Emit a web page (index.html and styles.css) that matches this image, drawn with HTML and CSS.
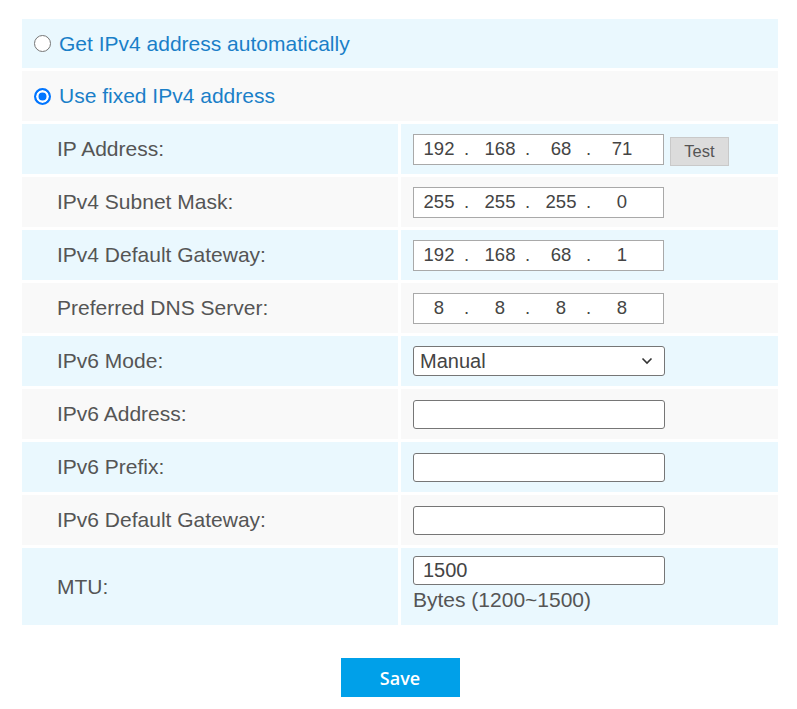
FILE: index.html
```html
<!DOCTYPE html>
<html lang="en">
<head>
<meta charset="utf-8">
<title>Network Settings</title>
<link rel="stylesheet" href="styles.css">
</head>
<body>
<form class="page">
  <div class="panel">
    <label class="opt blue"><input type="radio" name="mode" class="radio"><span>Get IPv4 address automatically</span></label>
    <label class="opt gray"><input type="radio" name="mode" class="radio" checked><span>Use fixed IPv4 address</span></label>

    <div class="lbl blue">IP Address:</div>
    <div class="val blue">
      <div class="ip"><input value="192"><span class="dot">.</span><input value="168"><span class="dot">.</span><input value="68"><span class="dot">.</span><input value="71"></div>
      <button type="button" class="test">Test</button>
    </div>

    <div class="lbl gray">IPv4 Subnet Mask:</div>
    <div class="val gray">
      <div class="ip"><input value="255"><span class="dot">.</span><input value="255"><span class="dot">.</span><input value="255"><span class="dot">.</span><input value="0"></div>
    </div>

    <div class="lbl blue">IPv4 Default Gateway:</div>
    <div class="val blue">
      <div class="ip"><input value="192"><span class="dot">.</span><input value="168"><span class="dot">.</span><input value="68"><span class="dot">.</span><input value="1"></div>
    </div>

    <div class="lbl gray">Preferred DNS Server:</div>
    <div class="val gray">
      <div class="ip"><input value="8"><span class="dot">.</span><input value="8"><span class="dot">.</span><input value="8"><span class="dot">.</span><input value="8"></div>
    </div>

    <div class="lbl blue">IPv6 Mode:</div>
    <div class="val blue">
      <div class="select-wrap">
        <select class="select"><option>Manual</option><option>DHCP</option></select>
        <svg class="chev" width="12" height="8" viewBox="0 0 12 8"><path d="M1.5 1.5 L6 6 L10.5 1.5" fill="none" stroke="#333" stroke-width="1.6"/></svg>
      </div>
    </div>

    <div class="lbl gray">IPv6 Address:</div>
    <div class="val gray"><input class="field"></div>

    <div class="lbl blue">IPv6 Prefix:</div>
    <div class="val blue"><input class="field"></div>

    <div class="lbl gray">IPv6 Default Gateway:</div>
    <div class="val gray"><input class="field"></div>

    <div class="lbl blue">MTU:</div>
    <div class="val blue mtu">
      <input class="field" value="1500">
      <div class="hint">Bytes (1200~1500)</div>
    </div>
  </div>
  <div class="actions"><button type="button" class="save">Save</button></div>
</form>
</body>
</html>
```
FILE: styles.css
```css
html, body {
  margin: 0;
  padding: 0;
  background: #fff;
}
body {
  font-family: "Liberation Sans", Arial, sans-serif;
  font-size: 21px;
  color: #555;
}
.page {
  padding: 19px 0 0 22px;
  width: 756px;
}
.panel {
  display: grid;
  grid-template-columns: 376px 377px;
  grid-template-rows: 49px repeat(9, 50px) 77px;
  gap: 3px;
}
.blue { background: #eaf8fe; }
.gray { background: #f9f9f9; }

.opt {
  grid-column: 1 / 3;
  display: flex;
  align-items: center;
  padding-left: 12px;
  gap: 8px;
  color: #1a7fc8;
  cursor: pointer;
}
.radio {
  appearance: none;
  -webkit-appearance: none;
  margin: 0;
  width: 17px;
  height: 17px;
  border-radius: 50%;
  border: 1.5px solid #767676;
  background: #fff;
  box-sizing: border-box;
  flex: none;
}
.radio:checked {
  border: 2px solid #0075ff;
  background: #0075ff;
  box-shadow: inset 0 0 0 2.5px #fff;
}
.lbl {
  display: flex;
  align-items: center;
  padding-left: 35px;
}
.val {
  display: flex;
  align-items: center;
  padding-left: 12px;
}
.ip {
  display: flex;
  align-items: center;
  width: 251px;
  height: 31px;
  box-sizing: border-box;
  border: 1px solid #a9a9a9;
  background: #fff;
}
.ip input {
  width: 50px;
  border: 0;
  padding: 0;
  margin: 0;
  background: transparent;
  text-align: center;
  font-family: "Liberation Sans", Arial, sans-serif;
  font-size: 18.5px;
  color: #444;
  outline: none;
}
.dot {
  width: 11px;
  font-size: 18.5px;
  color: #444;
  box-sizing: border-box;
}
.test {
  margin: 4px 0 0 6px;
  width: 59px;
  height: 29px;
  border: 1px solid #c9c9c9;
  background: #dcdcdc;
  color: #555;
  font-family: "Liberation Sans", Arial, sans-serif;
  font-size: 16.5px;
  padding: 0;
}
.select-wrap {
  position: relative;
  width: 252px;
  height: 30px;
}
.select {
  appearance: none;
  -webkit-appearance: none;
  width: 100%;
  height: 100%;
  border: 1px solid #767676;
  border-radius: 3px;
  background: #fff;
  font-family: "Liberation Sans", Arial, sans-serif;
  font-size: 20px;
  color: #444;
  padding: 0 0 0 6px;
  margin: 0;
}
.chev {
  position: absolute;
  right: 12px;
  top: 11px;
  pointer-events: none;
}
.field {
  width: 252px;
  height: 29px;
  box-sizing: border-box;
  border: 1px solid #767676;
  border-radius: 3px;
  background: #fff;
  font-family: "Liberation Sans", Arial, sans-serif;
  font-size: 20px;
  color: #444;
  padding: 0 9px;
  margin: 0;
}
.mtu {
  flex-direction: column;
  align-items: flex-start;
  justify-content: flex-start;
  padding-top: 8px;
  box-sizing: border-box;
}
.hint {
  margin-top: 3px;
  line-height: 24px;
  color: #555;
}
.actions {
  display: flex;
  justify-content: center;
  margin-top: 33px;
}
.save {
  width: 119px;
  height: 39px;
  border: 0;
  background: #00a0e9;
  color: #fff;
  font-family: "Open Sans", sans-serif;
  font-weight: 600;
  font-size: 18px;
  padding: 0;
}
```
